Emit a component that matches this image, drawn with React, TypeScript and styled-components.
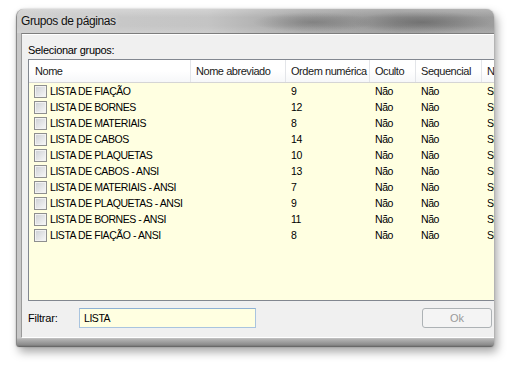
import React from "react";
import styled, { createGlobalStyle } from "styled-components";

const Global = createGlobalStyle`
  html, body { margin: 0; padding: 0; background: #ffffff; }
  body {
    width: 510px; height: 369px; overflow: hidden;
    font-family: "Liberation Sans", Arial, sans-serif;
  }
  * { box-sizing: border-box; }
`;

const Stage = styled.div`
  width: 510px;
  height: 369px;
  padding: 9px 0 0 16px;
`;

const Window = styled.div`
  width: 478px;
  height: 338px;
  display: flex;
  flex-direction: column;
  border-radius: 8px 8px 3px 3px;
  overflow: hidden;
  border-left: 1px solid #8a8a8a;
  box-shadow: 3px 5px 10px rgba(0, 0, 0, 0.35), 0 0 2px rgba(0, 0, 0, 0.25);
  background: linear-gradient(
    to bottom,
    #c8c8c8 0,
    #c8c8c8 calc(100% - 9px),
    #b4b4b4 calc(100% - 8px),
    #8a8a8a calc(100% - 2px),
    #5e5e5e 100%
  );
`;

const TitleBar = styled.div`
  height: 24px;
  flex-shrink: 0;
  padding-left: 4px;
  font-size: 12px;
  letter-spacing: -0.4px;
  line-height: 24px;
  color: #111;
  text-shadow: 0 0 6px rgba(255, 255, 255, 0.9);
  background:
    linear-gradient(to bottom, rgba(255,255,255,0.25), rgba(255,255,255,0) 35%, rgba(255,255,255,0) 70%, rgba(255,255,255,0.15)),
    radial-gradient(ellipse 60px 10px at 62% 55%, rgba(70,70,70,0.35), rgba(70,70,70,0)),
    radial-gradient(ellipse 70px 11px at 85% 55%, rgba(60,60,60,0.4), rgba(60,60,60,0)),
    linear-gradient(to right, #cbcbcb 0%, #c4c4c4 40%, #a4a4a4 60%, #949494 80%, #9c9c9c 100%);
`;

const Body = styled.div`
  flex: 1;
  display: flex;
  padding: 0 0 9px 4px;
  min-height: 0;
`;

const Client = styled.div`
  flex: 1;
  min-width: 0;
  display: flex;
  flex-direction: column;
  overflow: hidden;
  background: #f0f0f0;
  border-top: 1px solid #7d7d7d;
  border-left: 1px solid #9a9a9a;
  border-bottom: 1px solid #ffffff;
  box-shadow: inset 0 1px #ffffff;
  padding: 9px 0 9px 6px;
`;

const GroupLabel = styled.div`
  font-size: 11px;
  letter-spacing: -0.3px;
  line-height: 14px;
  color: #000;
  margin-bottom: 2px;
`;

const ListBox = styled.div`
  flex: 1;
  width: 520px;
  flex-shrink: 0;
  border: 1px solid #828790;
  background: #ffffe1;
  overflow: hidden;
`;

const cols = "162px 95px 84px 46px 66px 80px";

const Header = styled.div`
  display: grid;
  grid-template-columns: ${cols};
  height: 23px;
  border-bottom: 1px solid #d5d5d5;
  background: linear-gradient(to bottom, #ffffff, #ffffff 50%, #f6f7f9);
`;

const HeaderCell = styled.div<{ $first?: boolean }>`
  padding-left: ${(p) => (p.$first ? 6 : 5)}px;
  border-right: 1px solid #e3e5e9;
  font-size: 11px;
  letter-spacing: -0.45px;
  line-height: 22px;
  color: #1a1a1a;
  white-space: nowrap;
  overflow: hidden;
`;

const Row = styled.div`
  display: grid;
  grid-template-columns: ${cols};
  height: 16px;
`;

const Cell = styled.div`
  display: flex;
  align-items: center;
  padding-left: 5px;
  font-size: 10.5px;
  letter-spacing: -0.45px;
  line-height: 16px;
  color: #000;
  white-space: nowrap;
  overflow: hidden;
`;

const Check = styled.span`
  width: 13px;
  height: 13px;
  flex-shrink: 0;
  margin-right: 3px;
  border: 1px solid #8e8f8f;
  background: linear-gradient(135deg, #cdd0d4, #f8f8f8);
  box-shadow: inset 0 0 0 1px #f2f2f2;
`;

const FilterRow = styled.div`
  display: flex;
  align-items: center;
  height: 20px;
  margin-top: 7px;
`;

const FilterLabel = styled.div`
  width: 51px;
  font-size: 11px;
  letter-spacing: -0.2px;
  color: #000;
`;

const FilterInput = styled.div`
  width: 177px;
  height: 20px;
  border: 1px solid #a9c4df;
  border-top-color: #8eb1d4;
  background: #ffffe1;
  padding-left: 4px;
  font-size: 10.5px;
  letter-spacing: -0.45px;
  line-height: 18px;
  color: #000;
`;

const OkButton = styled.div`
  margin-left: auto;
  margin-right: 2px;
  width: 70px;
  height: 20px;
  border: 1px solid #adb2b5;
  border-radius: 3px;
  background: #f4f4f4;
  color: #9a9a9a;
  font-size: 11px;
  line-height: 18px;
  text-align: center;
`;

const rows: [string, string][] = [
  ["LISTA DE FIAÇÃO", "9"],
  ["LISTA DE BORNES", "12"],
  ["LISTA DE MATERIAIS", "8"],
  ["LISTA DE CABOS", "14"],
  ["LISTA DE PLAQUETAS", "10"],
  ["LISTA DE CABOS - ANSI", "13"],
  ["LISTA DE MATERIAIS - ANSI", "7"],
  ["LISTA DE PLAQUETAS - ANSI", "9"],
  ["LISTA DE BORNES - ANSI", "11"],
  ["LISTA DE FIAÇÃO - ANSI", "8"],
];

export default function App() {
  return (
    <>
      <Global />
      <Stage>
        <Window>
          <TitleBar>Grupos de páginas</TitleBar>
          <Body>
            <Client>
              <GroupLabel>Selecionar grupos:</GroupLabel>
              <ListBox>
                <Header>
                  <HeaderCell $first>Nome</HeaderCell>
                  <HeaderCell>Nome abreviado</HeaderCell>
                  <HeaderCell>Ordem numérica</HeaderCell>
                  <HeaderCell>Oculto</HeaderCell>
                  <HeaderCell>Sequencial</HeaderCell>
                  <HeaderCell>Numeração</HeaderCell>
                </Header>
                {rows.map(([name, order], i) => (
                  <Row key={i}>
                    <Cell>
                      <Check />
                      {name}
                    </Cell>
                    <Cell />
                    <Cell>{order}</Cell>
                    <Cell>Não</Cell>
                    <Cell>Não</Cell>
                    <Cell>Sim</Cell>
                  </Row>
                ))}
              </ListBox>
              <FilterRow>
                <FilterLabel>Filtrar:</FilterLabel>
                <FilterInput>LISTA</FilterInput>
                <OkButton>Ok</OkButton>
              </FilterRow>
            </Client>
          </Body>
        </Window>
      </Stage>
    </>
  );
}
